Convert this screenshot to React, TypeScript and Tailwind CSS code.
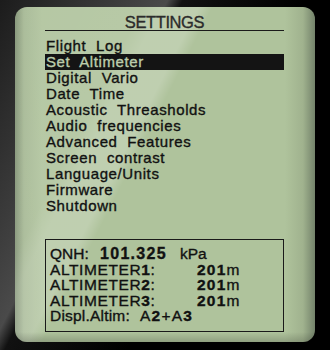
import React from 'react';

const menu = [
  'Flight Log',
  'Set Altimeter',
  'Digital Vario',
  'Date Time',
  'Acoustic Threasholds',
  'Audio frequencies',
  'Advanced Features',
  'Screen contrast',
  'Language/Units',
  'Firmware',
  'Shutdown',
];

const altimeters = ['1', '2', '3'];

export default function App() {
  return (
    <div className="w-[330px] h-[350px] overflow-hidden bg-[linear-gradient(117deg,#1c1c1c_0%,#3a3a3a_22%,#4a4a4a_33%,#111_36%,#000_60%)] pt-[7px] pl-[15px] font-['Liberation_Sans',Arial,sans-serif]">
      <div className="relative w-[300px] h-[335px] rounded-[12px] overflow-hidden bg-[linear-gradient(to_right,#7f9072_0%,#a4b792_3%,#afc39c_9%,#afc39c_90%,#a0b28e_96%,#73826a_100%)]">
        {/* glare */}
        <div className="absolute inset-0 pointer-events-none bg-[linear-gradient(117deg,rgba(255,255,255,0.08)_0%,rgba(255,255,255,0.1)_27%,rgba(255,255,255,0.2)_31%,rgba(255,255,255,0.2)_39%,rgba(255,255,255,0)_42%)]" />
        <div className="absolute inset-x-0 bottom-0 h-[10px] pointer-events-none bg-[linear-gradient(to_bottom,rgba(0,0,0,0),rgba(0,0,0,0.18))]" />

        <div className="relative pt-[7px] pl-[30px] w-[269px] [-webkit-text-stroke:0.35px_currentColor]">
          <div className="h-[17px] border-b border-[#1a1a1a] text-center text-[16.5px] leading-[16px] tracking-[-0.4px] text-[#2b2b2b]">
            SETTINGS
          </div>

          <ul className="mt-[7px] text-[15px] leading-[16px] tracking-[0.6px] [word-spacing:5px] text-[#111]">
            {menu.map((item, i) => (
              <li
                key={item}
                className={`h-[16px] pl-[1px] whitespace-nowrap ${i === 1 ? 'bg-[#141414] text-[#bccdab]' : ''}`}
              >
                {item}
              </li>
            ))}
          </ul>

          <div className="mt-[25px] h-[93px] border border-[#1a1a1a] pt-[6px] pl-[4px] text-[15.5px] leading-[15.5px] text-[#111] whitespace-nowrap">
            <div className="flex items-baseline h-[15.5px]">
              <span className="w-[50px]">QNH:</span>
              <span className="w-[80px] font-bold text-[16px] tracking-[1.3px]">101.325</span>
              <span>kPa</span>
            </div>
            {altimeters.map((n) => (
              <div key={n} className="flex items-baseline h-[15.5px]">
                <span className="w-[147px] tracking-[0.6px]">
                  ALTIMETER<span className="font-bold">{n}</span>:
                </span>
                <span className="tracking-[1.2px]">
                  <span className="font-bold">201</span>m
                </span>
              </div>
            ))}
            <div className="flex items-baseline h-[15.5px]">
              <span className="w-[90px] tracking-[0.2px]">Displ.Altim:</span>
              <span className="tracking-[1.2px]">
                A<span className="font-bold">2</span>+A<span className="font-bold">3</span>
              </span>
            </div>
          </div>
        </div>
      </div>
    </div>
  );
}
